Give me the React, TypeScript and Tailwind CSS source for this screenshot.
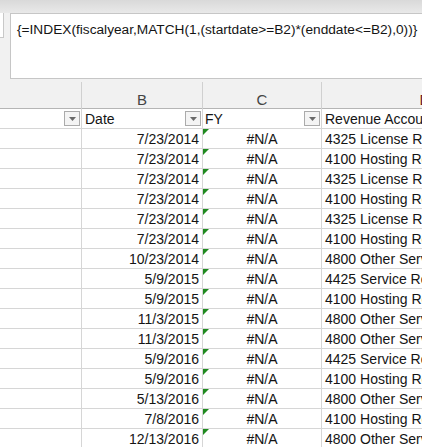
import React from "react";

const rows: [string, string][] = [
  ["7/23/2014", "4325 License Revenue"],
  ["7/23/2014", "4100 Hosting Revenue"],
  ["7/23/2014", "4325 License Revenue"],
  ["7/23/2014", "4100 Hosting Revenue"],
  ["7/23/2014", "4325 License Revenue"],
  ["7/23/2014", "4100 Hosting Revenue"],
  ["10/23/2014", "4800 Other Services"],
  ["5/9/2015", "4425 Service Revenue"],
  ["5/9/2015", "4100 Hosting Revenue"],
  ["11/3/2015", "4800 Other Services"],
  ["11/3/2015", "4800 Other Services"],
  ["5/9/2016", "4425 Service Revenue"],
  ["5/9/2016", "4100 Hosting Revenue"],
  ["5/13/2016", "4800 Other Services"],
  ["7/8/2016", "4100 Hosting Revenue"],
  ["12/13/2016", "4800 Other Services"],
];

function FilterButton() {
  return (
    <div className="w-[16px] h-[15px] shrink-0 border border-[#ababab] bg-[#f4f4f4] flex items-center justify-center">
      <svg width="7" height="4" viewBox="0 0 7 4">
        <polygon points="0,0 7,0 3.5,4" fill="#6a6a6a" />
      </svg>
    </div>
  );
}

const cell = "h-[20px] border-r border-b border-[#d6d6d6] flex items-center pt-[2px] overflow-hidden whitespace-nowrap";

export default function App() {
  return (
    <div className="w-[422px] h-[447px] overflow-hidden bg-white text-[14px] text-[#141414] font-['Liberation_Sans',Arial,sans-serif]">
      <div className="h-[13px] bg-gradient-to-b from-[#d9d9d9] to-[#e9e9e9]" />
      <div className="bg-[#f1f1f1]">
        <div className="flex items-start h-[66px]">
          <div className="w-[4px] h-[25px] bg-white border-r border-b border-[#c8c8c8]" />
          <div className="ml-[6px] flex-1 h-[66px] bg-white border border-r-0 border-[#c6c6c6] pl-[6px] pt-[6px] text-[13.7px] whitespace-nowrap overflow-hidden">
            {"{=INDEX(fiscalyear,MATCH(1,(startdate>=B2)*(enddate<=B2),0))}"}
          </div>
        </div>
        <div className="h-[3px]" />
        <div className="grid grid-cols-[82px_121px_119px_206px] h-[27px] border-b border-[#b5b5b5] text-[#444] text-[15px]">
          <div className="border-r border-[#d0d0d0]" />
          <div className="border-r border-[#d0d0d0] flex items-center justify-center pt-[7px]">B</div>
          <div className="border-r border-[#d0d0d0] flex items-center justify-center pt-[7px]">C</div>
          <div className="flex items-center justify-center pt-[7px] text-[#6b1a1a]">D</div>
        </div>
      </div>
      <div className="grid grid-cols-[82px_121px_119px_200px]">
        <div className={`${cell} justify-end pr-[1px] !pt-0`}>
          <FilterButton />
        </div>
        <div className={`${cell} pl-[3px] pr-[1px] !pt-0`}>
          <span className="flex-1 pt-[2px]">Date</span>
          <FilterButton />
        </div>
        <div className={`${cell} pl-[2px] pr-[1px] !pt-0`}>
          <span className="flex-1 pt-[2px]">FY</span>
          <FilterButton />
        </div>
        <div className={`${cell} pl-[3px]`}>Revenue Account</div>
        {rows.map(([date, acct], i) => (
          <React.Fragment key={i}>
            <div className={cell} />
            <div className={`${cell} justify-end pr-[3px]`}>{date}</div>
            <div className={`${cell} justify-center relative`}>
              <svg className="absolute left-0 top-0" width="6" height="6" viewBox="0 0 6 6">
                <polygon points="0,0 6,0 0,6" fill="#1f8a1f" />
              </svg>
              #N/A
            </div>
            <div className={`${cell} pl-[3px]`}>{acct}</div>
          </React.Fragment>
        ))}
      </div>
    </div>
  );
}
